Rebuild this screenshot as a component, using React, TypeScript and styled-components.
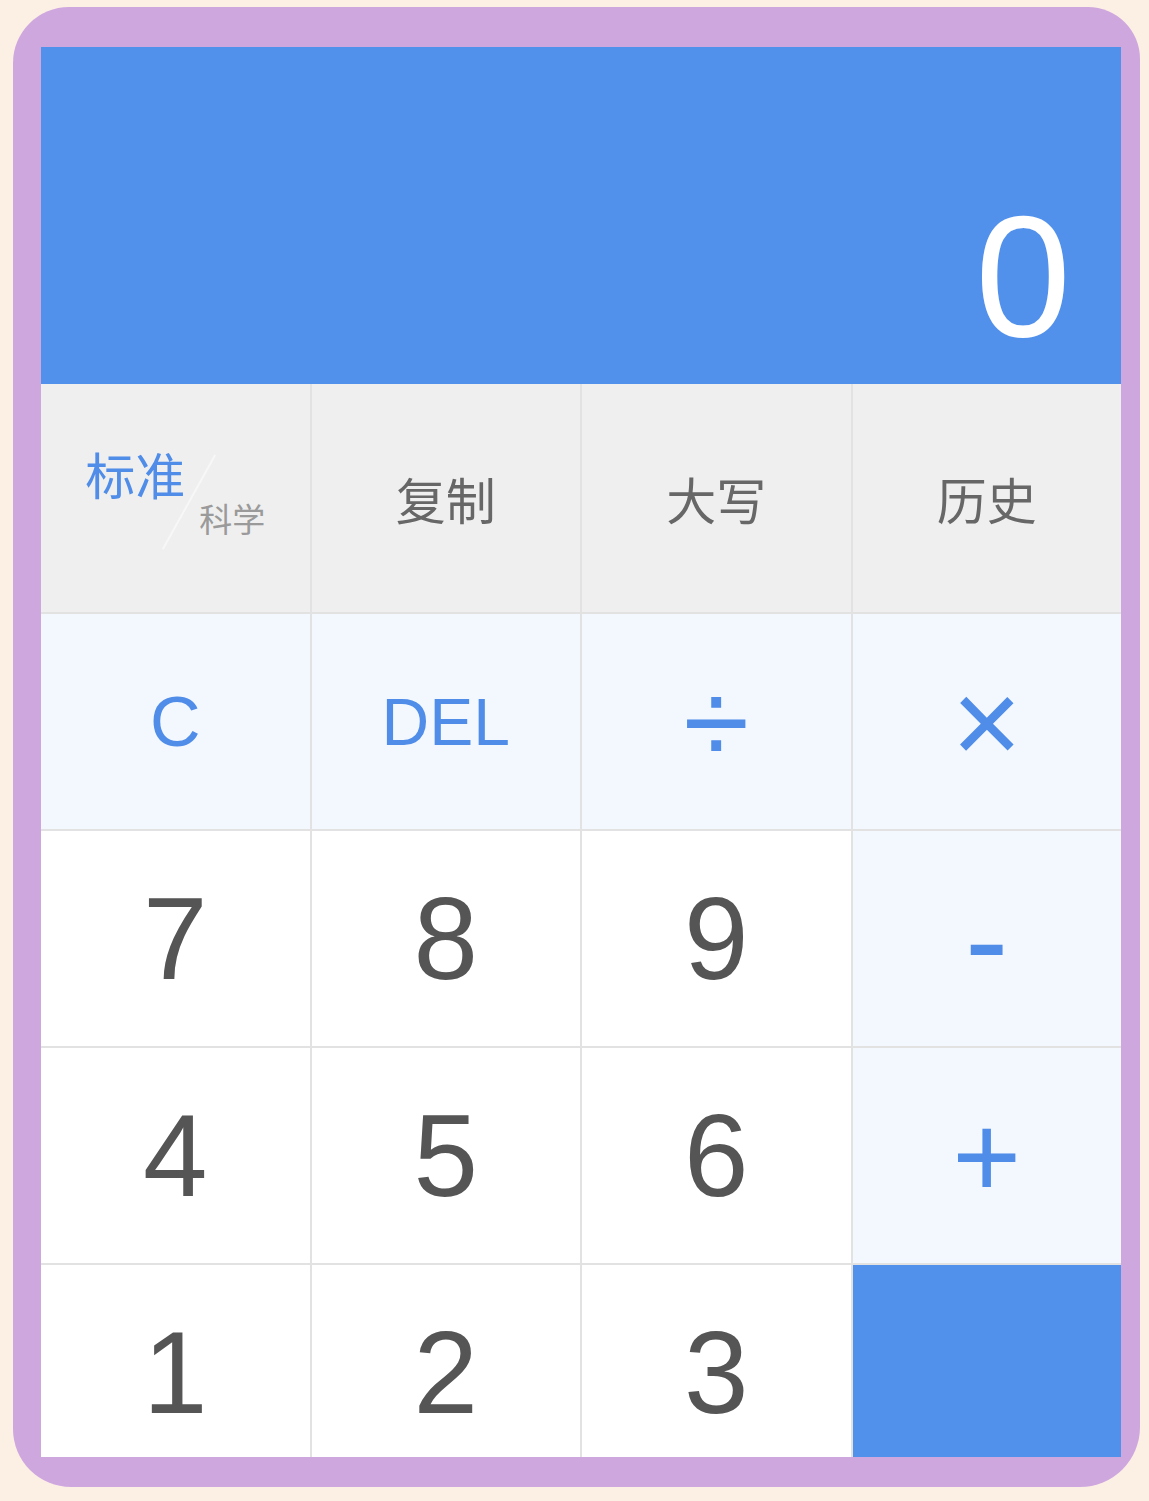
import React from 'react';
import styled, { createGlobalStyle } from 'styled-components';

const GlobalStyle = createGlobalStyle`
  html, body {
    margin: 0;
    padding: 0;
    min-height: 100%;
    background: #fcf0e5;
  }
  body {
    font-family: "Liberation Sans", "Noto Sans CJK SC", Arial, sans-serif;
  }
`;

type Tone = 'func' | 'op' | 'num' | 'eq';

const tones: Record<Tone, { bg: string; color: string }> = {
  func: { bg: '#efefef', color: '#676767' },
  op: { bg: '#f3f7fe', color: '#4f8de9' },
  num: { bg: '#ffffff', color: '#555555' },
  eq: { bg: '#5291eb', color: '#ffffff' },
};

const Frame = styled.div`
  box-sizing: border-box;
  width: 1127px;
  height: 1480px;
  margin: 7px 0 0 13px;
  padding: 40px 19px 30px 28px;
  border-radius: 56px 52px 60px 58px;
  background: #cfa7df;
`;

const Calculator = styled.div`
  height: 1410px;
  overflow: hidden;
  display: flex;
  flex-direction: column;
  background: #ffffff;
`;

const Display = styled.div`
  flex: 0 0 337px;
  box-sizing: border-box;
  display: flex;
  align-items: flex-end;
  justify-content: flex-end;
  padding: 0 50px 22px 0;
  background: #5291eb;
  color: #ffffff;
  font-size: 172px;
  line-height: 1;
`;

const Pad = styled.div`
  display: grid;
  grid-template-columns: repeat(4, 1fr);
  grid-template-rows: 228px repeat(5, 215px);
  gap: 2px;
  background: #e2e2e2;
`;

const Key = styled.button<{ $tone: Tone; $size: number; $span?: number }>`
  display: flex;
  align-items: center;
  justify-content: center;
  border: 0;
  margin: 0;
  padding: 0;
  background: ${(p) => tones[p.$tone].bg};
  color: ${(p) => tones[p.$tone].color};
  font-family: "Liberation Sans", "Noto Sans CJK SC", Arial, sans-serif;
  font-size: ${(p) => p.$size}px;
  line-height: 1;
  cursor: pointer;
  grid-row: ${(p) => (p.$span ? `span ${p.$span}` : 'auto')};
`;

const ModeSwitch = styled.div`
  position: relative;
  width: 180px;
  display: flex;
  flex-direction: column;
  padding-bottom: 14px;
  font-family: "Noto Sans CJK SC", "Liberation Sans", sans-serif;
  line-height: 1;
  text-align: left;

  /* thin diagonal divider between the two modes */
  &::after {
    content: '';
    position: absolute;
    left: 103px;
    top: 0;
    width: 1.5px;
    height: 108px;
    background: rgba(255, 255, 255, 0.5);
    transform: rotate(29deg);
    transform-origin: center;
  }
`;

const ModeActive = styled.span`
  align-self: flex-start;
  font-size: 50px;
  color: #4f8de9;
`;

const ModeAlt = styled.span`
  align-self: flex-end;
  margin-top: 4px;
  font-size: 33px;
  color: #9a9a9a;
`;

const CjkLabel = styled.span`
  font-family: "Noto Sans CJK SC", "Liberation Sans", sans-serif;
`;

const App = () => {
  return (
    <>
      <GlobalStyle />
      <Frame>
        <Calculator>
          <Display>0</Display>
          <Pad>
            <Key $tone="func" $size={50}>
              <ModeSwitch>
                <ModeActive>标准</ModeActive>
                <ModeAlt>科学</ModeAlt>
              </ModeSwitch>
            </Key>
            <Key $tone="func" $size={50}><CjkLabel>复制</CjkLabel></Key>
            <Key $tone="func" $size={50}><CjkLabel>大写</CjkLabel></Key>
            <Key $tone="func" $size={50}><CjkLabel>历史</CjkLabel></Key>

            <Key $tone="op" $size={70}>C</Key>
            <Key $tone="op" $size={66}>DEL</Key>
            <Key $tone="op" $size={120}>÷</Key>
            <Key $tone="op" $size={120}>×</Key>

            <Key $tone="num" $size={116}>7</Key>
            <Key $tone="num" $size={116}>8</Key>
            <Key $tone="num" $size={116}>9</Key>
            <Key $tone="op" $size={130}>-</Key>

            <Key $tone="num" $size={116}>4</Key>
            <Key $tone="num" $size={116}>5</Key>
            <Key $tone="num" $size={116}>6</Key>
            <Key $tone="op" $size={118}>+</Key>

            <Key $tone="num" $size={116}>1</Key>
            <Key $tone="num" $size={116}>2</Key>
            <Key $tone="num" $size={116}>3</Key>
            <Key $tone="eq" $size={116} $span={2} aria-label="=" />
          </Pad>
        </Calculator>
      </Frame>
    </>
  );
};

export default App;
